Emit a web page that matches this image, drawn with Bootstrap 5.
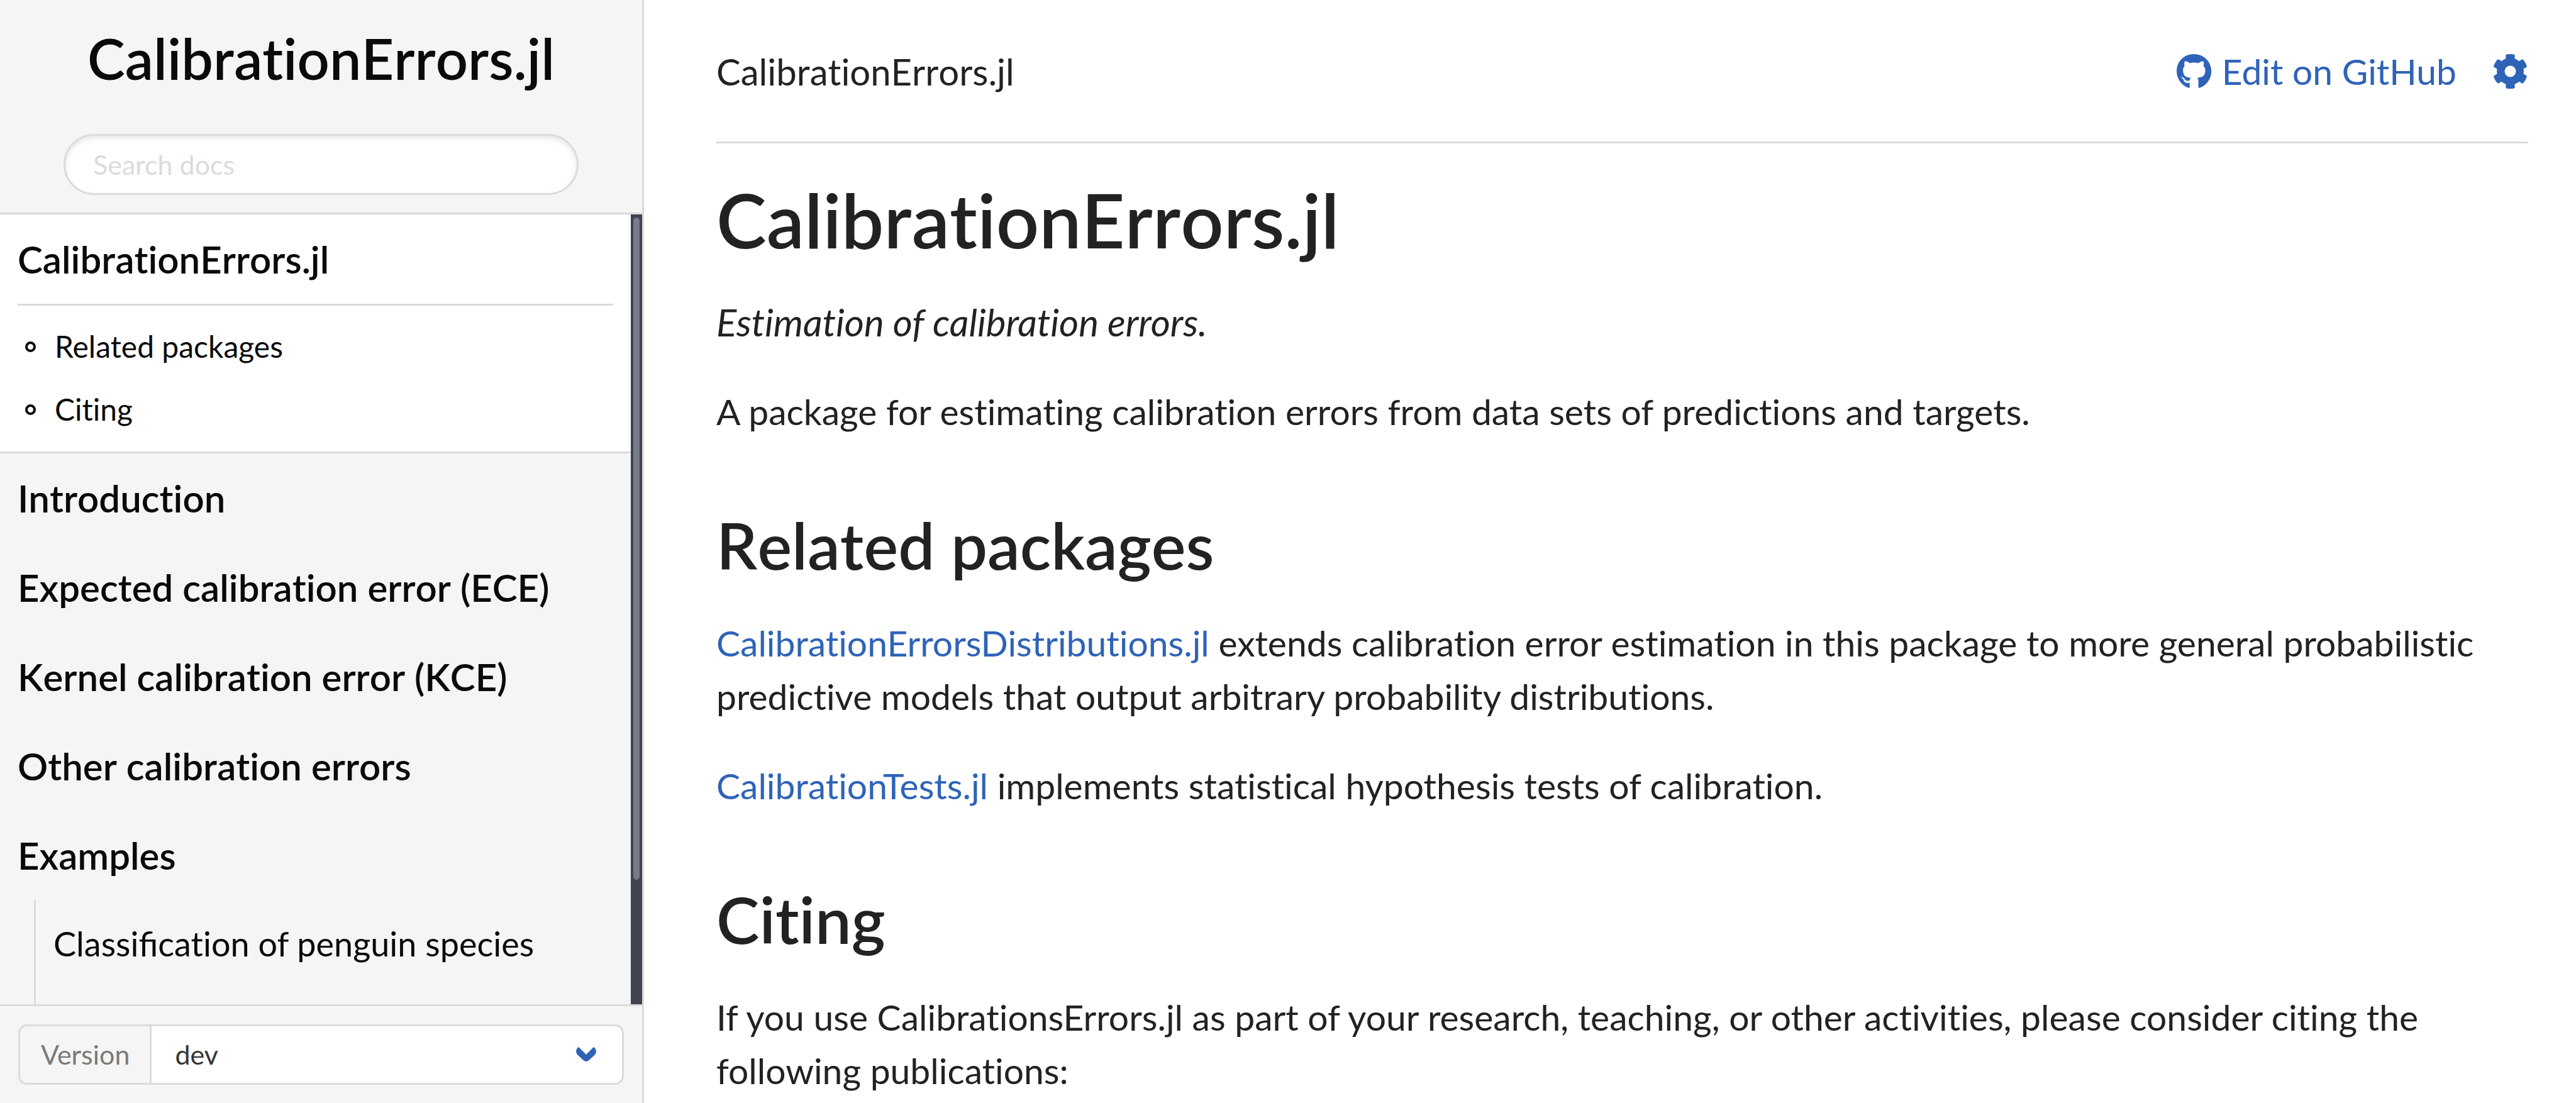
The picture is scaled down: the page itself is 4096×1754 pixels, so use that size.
<!DOCTYPE html>
<html lang="en">
<head>
<meta charset="utf-8">
<meta name="viewport" content="width=device-width, initial-scale=1">
<title>CalibrationErrors.jl</title>
<link href="https://cdn.jsdelivr.net/npm/bootstrap@5.3.0/dist/css/bootstrap.min.css" rel="stylesheet">
<style>
:root { --line: #dbdbdb; --blue: #2e63b8; --pane: #f5f5f5; --ink: #222; --strong-ink: #0a0a0a; }
html { font-size: 57px; }
body { font-family: Lato, "Liberation Sans", sans-serif; font-size: 57px; line-height: 85px; color: var(--ink); font-variant-ligatures: none; }
a { color: var(--blue); text-decoration: none; }
.with-ligature { font-variant-ligatures: common-ligatures; }
.docs-name, .toc-top, .docs-crumb, h1, h2 { font-kerning: none; }
.docs-sidebar { width: 25%; background: var(--pane); border-right: 3px solid var(--line); color: var(--strong-ink); }
.docs-sidebar a { color: var(--strong-ink); }
.docs-head { padding: 28px 101px; border-bottom: 3px solid var(--line); }
.docs-name { font-size: 90px; line-height: 128px; font-weight: 600; margin-bottom: 57px; }
.docs-search { height: 97px; font-size: 43px; line-height: 64px; padding: 8px 44px; border: 3px solid var(--line); box-shadow: inset 0 4px 8px rgba(10,10,10,.1); }
.docs-search::placeholder { color: #dbdbdb; opacity: 1; }
.toc-item { display: block; padding: 29px 28px 28px; }
.toc-top { font-size: 60px; font-weight: 600; }
.toc-active { background: #fff; border-bottom: 3px solid var(--line); }
.toc-sections { margin: 0 28px; padding: 15px 0 17px; border-top: 3px solid var(--line); }
.toc-sections a { display: flex; align-items: center; font-size: 48px; line-height: 76px; padding: 12px; }
.toc-ring { width: 17px; height: 17px; border: 4px solid currentColor; border-radius: 50%; margin-right: 30px; }
.toc-sub { margin-left: 54px; border-left: 3px solid var(--line); }
.toc-sub .toc-item { font-size: 54px; line-height: 81px; }
.toc-track { width: 18px; padding: 5px 4px; background: #404350; }
.toc-thumb { height: 84.5%; border-radius: 5px; background: #777c88; }
.docs-foot { padding: 29px; border-top: 3px solid var(--line); }
.docs-foot .input-group-text { height: 96px; font-size: 43px; line-height: 64px; padding: 0 33px; color: #7a7a7a; background: var(--pane); border: 3px solid var(--line); border-right: 0; border-radius: 14px; }
.docs-foot .form-select { height: 96px; font-size: 43px; line-height: 64px; padding: 0 37px; color: #363636; border: 3px solid var(--line); border-radius: 14px; background-image: none; }
.pick-arrow { right: 44px; top: 36px; width: 32px; height: 23px; z-index: 6; pointer-events: none; }
.docs-main { padding: 0 76px 0 115px; }
.docs-bar { padding: 71px 0 69px; border-bottom: 3px solid var(--line); margin-bottom: 50px; }
.docs-bar svg { display: block; height: 57px; fill: currentColor; }
.docs-crumb { font-size: 58px; }
.docs-tools { gap: 57px; }
.docs-edit { gap: 16px; }
.docs-main h1 { font-size: 120px; line-height: 142px; font-weight: 600; margin-bottom: 50px; }
.docs-main h2 { font-size: 103px; line-height: 125px; font-weight: 600; margin: 107px 0 51px; }
.docs-main p { margin-bottom: 57px; }
.docs-tagline { font-size: 60px; }
</style>
</head>
<body>
<div class="d-flex vh-100 overflow-hidden">
  <nav class="docs-sidebar d-flex flex-column flex-shrink-0" aria-label="Documentation">
    <div class="docs-head">
      <div class="docs-name text-center"><a href="#">CalibrationErrors.jl</a></div>
      <input class="form-control rounded-pill docs-search" type="text" placeholder="Search docs" aria-label="Search docs">
    </div>
    <div class="d-flex flex-grow-1 overflow-hidden">
      <ul class="list-unstyled mb-0 flex-grow-1 overflow-hidden">
        <li class="toc-active">
          <a class="toc-item toc-top" href="#top">CalibrationErrors.jl</a>
          <ul class="list-unstyled toc-sections">
            <li><a href="#related"><span class="toc-ring"></span>Related packages</a></li>
            <li><a href="#citing"><span class="toc-ring"></span>Citing</a></li>
          </ul>
        </li>
        <li><a class="toc-item toc-top" href="#">Introduction</a></li>
        <li><a class="toc-item toc-top" href="#">Expected calibration error (ECE)</a></li>
        <li><a class="toc-item toc-top" href="#">Kernel calibration error (KCE)</a></li>
        <li><a class="toc-item toc-top" href="#">Other calibration errors</a></li>
        <li>
          <span class="toc-item toc-top">Examples</span>
          <ul class="list-unstyled toc-sub pb-5">
            <li><a class="toc-item" href="#">Classi<span class="with-ligature">fi</span>cation of penguin species</a></li>
          </ul>
        </li>
      </ul>
      <div class="toc-track flex-shrink-0"><div class="toc-thumb"></div></div>
    </div>
    <div class="docs-foot">
      <div class="input-group position-relative">
        <label class="input-group-text" for="version">Version</label>
        <svg class="pick-arrow position-absolute" viewBox="0 0 108 78" fill="#2e63b8" aria-hidden="true"><path d="M14 0L54 41L94 0Q108 8 108 24Q108 34 100 42L68 72Q54 83 40 72L8 42Q0 34 0 24Q0 8 14 0Z"/></svg>
        <select class="form-select" id="version"><option>dev</option></select>
      </div>
    </div>
  </nav>
  <main class="docs-main flex-grow-1 overflow-hidden">
    <header class="docs-bar d-flex justify-content-between align-items-center">
      <span class="docs-crumb">CalibrationErrors.jl</span>
      <div class="docs-tools d-flex align-items-center">
        <a class="docs-edit d-flex align-items-center" href="#"><svg viewBox="0 0 496 512" aria-hidden="true"><path d="M165.900 397.400c0 2-2.300 3.600-5.200 3.600-3.300.3-5.600-1.300-5.600-3.600 0-2 2.300-3.600 5.200-3.600 3-.3 5.600 1.300 5.600 3.600zm-31.100-4.500c-.7 2 1.300 4.300 4.300 4.900 2.600 1 5.600 0 6.200-2s-1.300-4.300-4.300-5.200c-2.600-.7-5.500.3-6.200 2.300zm44.200-1.700c-2.900.7-4.900 2.600-4.600 4.900.3 2 2.900 3.300 5.900 2.600 2.900-.7 4.900-2.600 4.600-4.600-.3-1.900-3-3.200-5.900-2.900zM244.800 8C106.100 8 0 113.300 0 252c0 110.900 69.800 205.800 169.500 239.200 12.800 2.300 17.300-5.600 17.300-12.100 0-6.200-.3-40.400-.3-61.400 0 0-70 15-84.700-29.800 0 0-11.400-29.100-27.800-36.600 0 0-22.900-15.700 1.600-15.400 0 0 24.900 2 38.600 25.800 21.900 38.600 58.600 27.500 72.900 20.900 2.300-16 8.800-27.100 16-33.700-55.900-6.200-112.300-14.300-112.300-110.500 0-27.500 7.600-41.300 23.600-58.900-2.600-6.500-11.100-33.300 2.600-67.900 20.900-6.500 69 27 69 27 20-5.600 41.500-8.500 62.800-8.500s42.800 2.900 62.800 8.500c0 0 48.100-33.600 69-27 13.700 34.700 5.200 61.400 2.600 67.900 16 17.700 25.800 31.500 25.800 58.900 0 96.500-58.900 104.200-114.800 110.500 9.200 7.900 17 22.900 17 46.400 0 33.700-.3 75.400-.3 83.600 0 6.500 4.600 14.400 17.300 12.100C428.200 457.800 496 362.900 496 252 496 113.300 383.500 8 244.800 8zM97.200 352.900c-1.300 1-1 3.300.7 5.200 1.600 1.600 3.900 2.300 5.200 1 1.300-1 1-3.300-.7-5.200-1.600-1.600-3.900-2.300-5.200-1zm-10.800-8.100c-.7 1.300.3 2.900 2.300 3.900 1.600 1 3.600.7 4.300-.7.7-1.300-.3-2.900-2.300-3.900-2-.6-3.600-.3-4.300.7zm32.400 35.600c-1.600 1.300-1 4.300 1.300 6.200 2.300 2.300 5.200 2.600 6.500 1 1.300-1.300.7-4.300-1.300-6.200-2.200-2.300-5.200-2.600-6.500-1zm-11.400-14.700c-1.600 1-1.600 3.600 0 5.900 1.600 2.300 4.300 3.300 5.600 2.300 1.600-1.300 1.600-3.900 0-6.200-1.400-2.300-4-3.300-5.600-2z"/></svg>Edit on GitHub</a>
        <a href="#" aria-label="Settings"><svg viewBox="0 0 512 512" aria-hidden="true"><path d="M487.400 315.700l-42.600-24.600c4.300-23.200 4.300-47 0-70.200l42.600-24.600c4.900-2.800 7.100-8.600 5.500-14-11.100-35.600-30-67.800-54.700-94.600-3.800-4.100-10-5.100-14.800-2.300L380.800 110c-17.900-15.400-38.500-27.300-60.800-35.100V25.800c0-5.600-3.900-10.500-9.400-11.700-36.700-8.200-74.300-7.800-109.200 0-5.500 1.200-9.400 6.100-9.400 11.700V75c-22.200 7.900-42.800 19.800-60.800 35.100L88.700 85.500c-4.900-2.800-11-1.900-14.800 2.300-24.700 26.700-43.600 58.900-54.700 94.600-1.700 5.400.6 11.200 5.500 14L67.300 221c-4.300 23.200-4.300 47 0 70.200l-42.600 24.600c-4.900 2.800-7.100 8.600-5.500 14 11.100 35.600 30 67.800 54.700 94.600 3.800 4.100 10 5.100 14.800 2.300l42.600-24.600c17.900 15.400 38.500 27.300 60.800 35.100v49.200c0 5.600 3.900 10.500 9.400 11.700 36.700 8.200 74.300 7.800 109.200 0 5.500-1.200 9.400-6.100 9.400-11.700v-49.200c22.200-7.900 42.800-19.800 60.800-35.100l42.600 24.600c4.900 2.800 11 1.900 14.800-2.300 24.700-26.700 43.600-58.900 54.700-94.600 1.500-5.500-.7-11.300-5.600-14.100zM256 336c-44.100 0-80-35.900-80-80s35.900-80 80-80 80 35.900 80 80-35.900 80-80 80z"/></svg></a>
      </div>
    </header>
    <article>
      <h1 id="top">CalibrationErrors.jl</h1>
      <p class="docs-tagline"><em>Estimation of calibration errors.</em></p>
      <p>A package for estimating calibration errors from data sets of predictions and targets.</p>
      <h2 id="related">Related packages</h2>
      <p><a href="#">CalibrationErrorsDistributions.jl</a> extends calibration error estimation in this package to more general probabilistic predictive models that output arbitrary probability distributions.</p>
      <p><a href="#">CalibrationTests.jl</a> implements statistical hypothesis tests of calibration.</p>
      <h2 id="citing">Citing</h2>
      <p>If you use CalibrationsErrors.jl as part of your research, teaching, or other activities, please consider citing the following publications:</p>
    </article>
  </main>
</div>
<script src="https://cdn.jsdelivr.net/npm/bootstrap@5.3.0/dist/js/bootstrap.bundle.min.js"></script>
</body>
</html>
